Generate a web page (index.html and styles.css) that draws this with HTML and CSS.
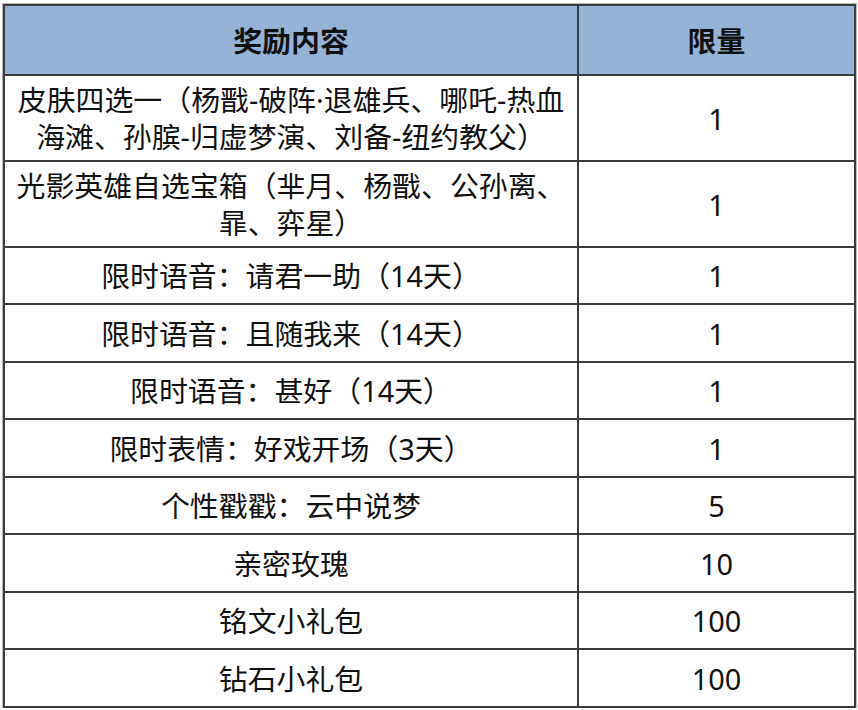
FILE: index.html
```html
<!DOCTYPE html>
<html lang="zh-CN">
<head>
<meta charset="utf-8">
<link rel="stylesheet" href="styles.css">
</head>
<body>
<table class="rewards">
  <colgroup><col class="c-name"><col class="c-qty"></colgroup>
  <thead>
    <tr class="head"><th>奖励内容</th><th>限量</th></tr>
  </thead>
  <tbody>
    <tr class="tall"><td>皮肤四选一（杨戬-破阵·退雄兵、哪吒-热血<br>海滩、孙膑-归虚梦演、刘备-纽约教父）</td><td>1</td></tr>
    <tr class="tall"><td>光影英雄自选宝箱（芈月、杨戬、公孙离、<br>暃、弈星）</td><td>1</td></tr>
    <tr class="r1"><td>限时语音：请君一助（14天）</td><td>1</td></tr>
    <tr class="r2"><td>限时语音：且随我来（14天）</td><td>1</td></tr>
    <tr class="r1"><td>限时语音：甚好（14天）</td><td>1</td></tr>
    <tr class="r2"><td>限时表情：好戏开场（3天）</td><td>1</td></tr>
    <tr class="r1"><td>个性戳戳：云中说梦</td><td>5</td></tr>
    <tr class="r2"><td>亲密玫瑰</td><td>10</td></tr>
    <tr class="r1"><td>铭文小礼包</td><td>100</td></tr>
    <tr class="r2"><td>钻石小礼包</td><td>100</td></tr>
  </tbody>
</table>
</body>
</html>
```
FILE: styles.css
```css
html, body {
  margin: 0;
  padding: 0;
  background: #ffffff;
}
body {
  padding: 4px 0 0 3px;
}
.rewards {
  border-collapse: collapse;
  table-layout: fixed;
  width: 851px;
  font-family: "Noto Sans", "Noto Sans CJK SC", "Microsoft YaHei", sans-serif;
  font-size: 28.9px;
  color: #111111;
  outline: 1px solid #b8b8b8;
  outline-offset: 0;
}
.c-name { width: 574px; }
.c-qty { width: 277px; }
.rewards th,
.rewards td {
  border: 2px solid #3c3c3c;
  padding: 0;
  text-align: center;
  vertical-align: middle;
  line-height: 37px;
}
.rewards th {
  background: #95b3d7;
  font-weight: 700;
  height: 68px;
}
.tall td { height: 84px; }
.r1 td { height: 55px; }
.r2 td { height: 56px; }
```
